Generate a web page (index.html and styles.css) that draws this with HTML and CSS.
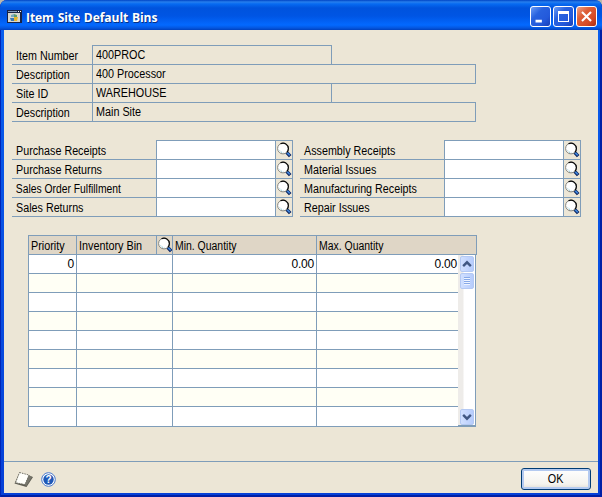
FILE: index.html
```html
<!DOCTYPE html>
<html lang="en">
<head>
<meta charset="utf-8">
<title>Item Site Default Bins</title>
<link rel="stylesheet" href="styles.css">
</head>
<body>
<svg class="defs" width="0" height="0" aria-hidden="true">
  <symbol id="lens" viewBox="0 0 16 18">
    <path d="M10.4 11.1l3.8 4" stroke="#061b55" stroke-width="3.5"/>
    <path d="M10.9 11.4l2.9 3" stroke="#3d83d8" stroke-width="1.8"/>
    <circle cx="7" cy="7.5" r="5.4" fill="#fff" stroke="#85857e"/>
    <path d="M4.5 2.7C8.2.8 12.4 3.5 12.4 7.5c0 1.6-.6 2.8-1.5 3.8" fill="none" stroke="#080808" stroke-width="1.2"/>
    <path d="M3.7 9.5l1.4 1.6 2.2.6" fill="none" stroke="#79c4d4" stroke-dasharray="1 1"/>
  </symbol>
</svg>
<main class="window">
  <header class="titlebar">
    <svg class="app-icon" width="15" height="13" viewBox="0 0 15 13">
      <path d="M0 0h15v13H0z" fill="#182344"/><path d="M1 3h12v9H1z" fill="#d8d7ce"/>
      <path d="M1 1h9v1H1z" fill="#7f98b9"/><path d="M11 1h1v1h-1zM13 1h1v1h-1z" fill="#fff"/>
      <path d="M4 5l3-1v3H4z" fill="#75a7bd"/><path d="M7 4l3 1v2H7z" fill="#5b9b6c"/>
      <path d="M3 8h4v3H4z" fill="#3877b5"/><path d="M7 7h4l-1 4H7z" fill="#e4b52d"/>
    </svg>
    <h1>Item Site Default Bins</h1>
    <div class="controls">
      <svg class="control" viewBox="0 0 21 21"><path d="M5 14h7v3H5z" fill="#fff"/></svg>
      <svg class="control" viewBox="0 0 19 19"><path d="M4 4h11v11H4zM5 7v7h9V7z" fill="#fff" fill-rule="evenodd"/></svg>
      <svg class="control close" viewBox="0 0 21 21"><path d="M5.5 5.5l10 10m0-10l-10 10" stroke="#fff" stroke-width="2.3"/></svg>
    </div>
  </header>
  <div class="content">
    <section class="details">
      <div class="detail"><span class="label">Item Number</span><span class="value short"><span class="text">400PROC</span></span></div>
      <div class="detail"><span class="label">Description</span><span class="value"><span class="text">400 Processor</span></span></div>
      <div class="detail"><span class="label">Site ID</span><span class="value short"><span class="text">WAREHOUSE</span></span></div>
      <div class="detail"><span class="label">Description</span><span class="value"><span class="text">Main Site</span></span></div>
    </section>
    <section class="bins">
      <div class="bin-group">
        <div class="bin"><span class="label">Purchase Receipts</span><span class="entry"></span><span class="lookup"><svg><use href="#lens"/></svg></span></div>
        <div class="bin"><span class="label">Purchase Returns</span><span class="entry"></span><span class="lookup"><svg><use href="#lens"/></svg></span></div>
        <div class="bin"><span class="label tight">Sales Order Fulfillment</span><span class="entry"></span><span class="lookup"><svg><use href="#lens"/></svg></span></div>
        <div class="bin"><span class="label">Sales Returns</span><span class="entry"></span><span class="lookup"><svg><use href="#lens"/></svg></span></div>
      </div>
      <div class="bin-group">
        <div class="bin"><span class="label">Assembly Receipts</span><span class="entry"></span><span class="lookup"><svg><use href="#lens"/></svg></span></div>
        <div class="bin"><span class="label">Material Issues</span><span class="entry"></span><span class="lookup"><svg><use href="#lens"/></svg></span></div>
        <div class="bin"><span class="label">Manufacturing Receipts</span><span class="entry"></span><span class="lookup"><svg><use href="#lens"/></svg></span></div>
        <div class="bin"><span class="label">Repair Issues</span><span class="entry"></span><span class="lookup"><svg><use href="#lens"/></svg></span></div>
      </div>
    </section>
    <section class="table">
      <div class="table-head"><span><span class="text">Priority</span></span><span><span class="text">Inventory Bin</span></span><span class="head-lookup"><svg><use href="#lens"/></svg></span><span class="quantity"><span class="text">Min. Quantity</span></span><span class="quantity"><span class="text">Max. Quantity</span></span></div>
      <div class="table-body">
        <div class="rows">
          <div class="row"><span>0</span><span></span><span>0.00</span><span>0.00</span></div>
          <div class="row"><span></span><span></span><span></span><span></span></div>
          <div class="row"><span></span><span></span><span></span><span></span></div>
          <div class="row"><span></span><span></span><span></span><span></span></div>
          <div class="row"><span></span><span></span><span></span><span></span></div>
          <div class="row"><span></span><span></span><span></span><span></span></div>
          <div class="row"><span></span><span></span><span></span><span></span></div>
          <div class="row"><span></span><span></span><span></span><span></span></div>
          <div class="row"><span></span><span></span><span></span><span></span></div>
        </div>
        <div class="scrollbar">
          <svg class="scroll-button" viewBox="0 0 14 16"><path d="M2.5 10.5L7 6l4.5 4.5" fill="none" stroke="#405782" stroke-width="2.8"/></svg>
          <svg class="scroll-button thumb" viewBox="0 0 12 14"><path d="M3 3.5h6M3 5.5h6M3 7.5h6M3 9.5h6" stroke="#87a9e8"/><path d="M3 4.5h6M3 6.5h6M3 8.5h6M3 10.5h6" stroke="#eef4ff"/></svg>
          <svg class="scroll-button down" viewBox="0 0 14 16"><path d="M2.5 5.5L7 10l4.5-4.5" fill="none" stroke="#405782" stroke-width="2.8"/></svg>
        </div>
      </div>
    </section>
    <footer>
      <svg class="note" width="20" height="17" viewBox="0 0 20 17"><path d="M5.5 1.5L19 6l-6.5 10L.5 12.5z" fill="#5b5a50"/><path d="M5.5 1.5L15 4l-4 9.5-9.5-1.8z" fill="#fffffb" stroke="#77756a" stroke-dasharray="1.5 1"/><path d="M15 4l3 2-6 9.5-.8-2z" fill="#77766c"/></svg>
      <svg class="help" width="15" height="15" viewBox="0 0 15 15"><circle cx="7.5" cy="7.5" r="6.8" fill="#fff" stroke="#4676cb" stroke-width="1"/><circle cx="7.5" cy="7.5" r="5.2" fill="#1f58b7"/><text x="7.5" y="11" text-anchor="middle">?</text></svg>
      <button><span class="ok">OK</span></button>
    </footer>
  </div>
</main>
</body>
</html>
```
FILE: styles.css
```css
* { box-sizing: border-box; }
body { margin: 0; background: #b9b8ae; color: #000; font-family: "Liberation Sans", Arial, sans-serif; font-size: 12px; overflow: hidden; }
.defs { display: block; }
.window { height: 497px; width: 602px; overflow: hidden; padding: 0 4px 4px; border-radius: 7px 7px 0 0; background: linear-gradient(#0a60ee, #0640d7); box-shadow: inset 1px 0 #0025b8, inset -2px -2px #001fa5; }
.titlebar { display: flex; align-items: center; height: 30px; margin: 0 -4px; padding: 3px 5px 0 7px; border-radius: 7px 7px 0 0; background: linear-gradient(#0044c4 0, #277fed 2px, #066af1 4px, #0053dd 8px, #0055e4 16px, #0369ff 25px, #0456df 28px, #0040bd 30px); }
.app-icon { margin: -1px 4px 0 0; }
h1 { margin: 0; flex: 1; color: #fff; font: bold 13px/20px "Open Sans", sans-serif; letter-spacing: -.1px; word-spacing: .8px; text-shadow: 1px 1px #063184; white-space: nowrap; transform: scaleX(.93); transform-origin: left; }
.controls { display: flex; gap: 2px; }
.control { width: 21px; height: 21px; border: 1px solid #fff; border-radius: 3px; background: linear-gradient(135deg, #6c9df6, #2862df 35%, #2359db 70%, #173eb6); }
.control.close { background: linear-gradient(135deg, #eda187, #dd5f38 35%, #d84b25 70%, #aa2d12); }
.content { height: 463px; background: #ece6d6; padding-top: 15px; }
.details { width: 464px; margin-left: 8px; }
.detail { display: flex; height: 19px; border-bottom: 1px solid #7f9db9; }
.detail:nth-child(odd) { width: 320px; }
.detail:first-child { height: 20px; }
.label { padding-left: 4.5px; line-height: 20px; white-space: nowrap; transform: scaleX(.895); transform-origin: left; }
.label.tight { transform: scaleX(.86); }
.detail:first-child .label, .bin:first-child .label { line-height: 22px; }
.detail .label { width: 80px; }
.value { width: 384px; padding-left: 3px; border: solid #7f9db9; border-width: 0 1px; line-height: 19px; }
.text { display: inline-block; transform: scaleX(.9); transform-origin: left; white-space: nowrap; }
.value.short { width: 240px; }
.detail:first-child .value { border-top-width: 1px; }
.detail:nth-child(2) .value, .detail:nth-child(4) .value { margin-top: -1px; border-top: 1px solid #7f9db9; }
.bins { display: flex; gap: 7px; margin: 18px 0 0 8px; }
.bin { display: flex; width: 281px; height: 19px; border-bottom: 1px solid #7f9db9; }
.bin:first-child { height: 20px; }
.bin:first-child .entry, .bin:first-child .lookup { border-top: 1px solid #7f9db9; }
.bin .label { width: 144px; }
.entry { width: 119px; border-left: 1px solid #7f9db9; background: #fff; }
.lookup { width: 18px; border: solid #7f9db9; border-width: 0 1px; }
.lookup svg, .head-lookup svg { display: block; width: 16px; height: 18px; }
.table { width: 449px; margin: 18px 0 0 24px; }
.table-head { display: grid; grid-template-columns: 47px 80px 16px 144px 1fr; height: 20px; border: 1px solid #7f9db9; background: #dfd6c6; line-height: 20px; white-space: nowrap; }
.table-head > span { padding-left: 2px; border-left: 1px solid #7f9db9; }
.table-head > span:first-child { border: 0; }
.table-head > .head-lookup { padding: 0; }
.quantity .text { transform: scaleX(.87); }
.table-body { display: flex; width: 448px; height: 172px; border: solid #7f9db9; border-width: 0 1px 2px; background: #fff; }
.rows { width: 429px; height: 171px; }
.row { display: grid; grid-template-columns: 47px 96px 144px 142px; height: 19px; border-bottom: 1px solid #7f9db9; background: #fff; }
.row:nth-child(even) { background: #fffff5; }
.row:last-child { border: 0; }
.row span { border-left: 1px solid #7f9db9; padding-right: 2px; text-align: right; line-height: 19px; letter-spacing: -.2px; }
.row span:first-child { border: 0; }
.row span:last-child { padding-right: 1px; }
.scrollbar { display: flex; flex-direction: column; width: 17px; padding: 1px 1px 0 2px; background: linear-gradient(90deg, #eeece9 5px, #fff 6px); }
.scroll-button { width: 14px; height: 16px; border: 1px solid #b4c9f3; border-radius: 2px; background: linear-gradient(90deg, #d1e0ff, #b6ccfc); }
.thumb { margin-top: 1px; }
.down { margin-top: auto; }
footer { display: flex; align-items: center; height: 32px; margin-top: 34px; padding: 3px 7px 0 10px; border-top: 1px solid #7f9db9; }
.help { margin-left: 7px; }
.help text { fill: #fff; font: bold 10px "Liberation Sans", sans-serif; }
button { width: 70px; height: 22px; margin: -1px 0 0 auto; padding: 0; border: 1px solid #003c74; border-radius: 3px; background: linear-gradient(#fff, #f4f3ee 75%, #e0ddd5); box-shadow: inset 0 0 0 2px #b4caf0; color: #000; font: 12px "Liberation Sans", sans-serif; }
.ok { display: inline-block; transform: scaleX(.9); }
```
